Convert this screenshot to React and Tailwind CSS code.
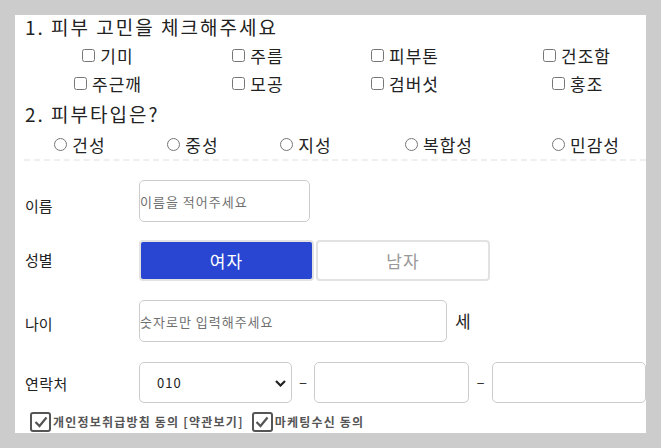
import React from "react";

const font = { fontFamily: '"Noto Sans CJK KR", "Noto Sans", sans-serif' };

function Check({ label }) {
  return (
    <label className="flex items-center gap-[5px] text-[17px] leading-none text-[#222] tracking-[1px]">
      <input type="checkbox" className="m-0 w-[13px] h-[13px]" />
      <span>{label}</span>
    </label>
  );
}

function Radio({ label }) {
  return (
    <label className="flex items-center gap-[5px] text-[17px] leading-none text-[#222] tracking-[1px]">
      <input type="radio" name="skin" className="m-0 w-[13px] h-[13px]" />
      <span>{label}</span>
    </label>
  );
}

function BigCheck({ label }) {
  return (
    <label className="flex items-center gap-[2px] text-[12px] font-bold leading-none text-[#555] tracking-[1.2px] whitespace-nowrap">
      <span className="w-[21px] h-[20px] border-2 border-[#555] rounded-[3px] bg-white flex items-center justify-center">
        <svg width="14" height="12" viewBox="0 0 14 12">
          <path d="M1.5 6 L5.5 10 L12.5 1.5" fill="none" stroke="#555" strokeWidth="2.2" />
        </svg>
      </span>
      <span>{label}</span>
    </label>
  );
}

export default function App() {
  return (
    <div className="w-[661px] h-[448px] bg-[#cccccc] p-[15px]" style={font}>
      <div className="w-[631px] h-[418px] bg-white">
        <h2 className="pt-[1px] h-[23px] leading-[22px] pl-[10px] text-[19px] font-normal text-[#222] whitespace-nowrap tracking-[2px]">
          1. 피부 고민을 체크해주세요
        </h2>
        <div className="mt-[3px] grid grid-cols-[186px_114px_180px_151px] grid-rows-[28px_28px] items-center justify-items-center">
          <Check label="기미" />
          <Check label="주름" />
          <Check label="피부톤" />
          <div className="justify-self-start pl-[48px]">
            <Check label="건조함" />
          </div>
          <Check label="주근깨" />
          <Check label="모공" />
          <Check label="검버섯" />
          <div className="justify-self-start pl-[57px]">
            <Check label="홍조" />
          </div>
        </div>
        <h2 className="mt-[7px] h-[20px] leading-[20px] pl-[10px] text-[19px] font-normal text-[#222] whitespace-nowrap tracking-[2px]">
          2. 피부타입은?
        </h2>
        <div className="mt-[7px] h-[27px] grid grid-cols-[130px_96px_130px_136px_139px] items-center justify-items-center">
          <Radio label="건성" />
          <Radio label="중성" />
          <Radio label="지성" />
          <Radio label="복합성" />
          <div className="justify-self-start pl-[45px]">
            <Radio label="민감성" />
          </div>
        </div>
        <div className="mt-[1px] ml-[9px] border-t-2 border-dashed border-[#efefef]" />

        <div className="pl-[10px] text-[15px] text-[#222]">
          <div className="mt-[19px] h-[42px] flex items-center">
            <span className="w-[114px] pt-[10px]">이름</span>
            <input
              className="w-[171px] h-[42px] border border-[#cccccc] rounded-[5px] px-0 text-[13px] tracking-[1px] placeholder:text-[#707070] outline-none"
              placeholder="이름을 적어주세요"
            />
          </div>
          <div className="mt-[18px] h-[41px] flex items-center">
            <span className="w-[114px]">성별</span>
            <button className="w-[175px] h-[41px] border-2 border-[#e2e2e2] rounded-[4px] bg-[#2846d2] text-white text-[17px] tracking-[1px]">
              여자
            </button>
            <button className="ml-[2px] w-[174px] h-[41px] border-2 border-[#e2e2e2] rounded-[4px] bg-white text-[#999] text-[17px] tracking-[1px]">
              남자
            </button>
          </div>
          <div className="mt-[19px] h-[42px] flex items-center">
            <span className="w-[114px] pt-[6px]">나이</span>
            <input
              className="w-[308px] h-[42px] border border-[#cccccc] rounded-[5px] px-0 text-[13px] tracking-[1px] placeholder:text-[#707070] outline-none"
              placeholder="숫자로만 입력해주세요"
            />
            <span className="ml-[8px] text-[17px] text-[#222]">세</span>
          </div>
          <div className="mt-[20px] h-[41px] flex items-center">
            <span className="w-[114px] pt-[4px] tracking-[0.5px]">연락처</span>
            <div className="relative w-[153px] h-[41px]">
              <select className="appearance-none w-full h-full border border-[#cccccc] rounded-[5px] pl-[17px] text-[13px] text-[#222] bg-white outline-none tracking-[1px]">
                <option>010</option>
              </select>
              <svg
                className="absolute right-[6px] top-[18px] pointer-events-none"
                width="11"
                height="7"
                viewBox="0 0 11 7"
              >
                <path d="M1 1 L5.5 5.5 L10 1" fill="none" stroke="#222" strokeWidth="2.2" />
              </svg>
            </div>
            <span className="w-[22px] text-center text-[15px] text-[#333]">–</span>
            <input className="w-[155px] h-[41px] border border-[#cccccc] rounded-[5px] outline-none" />
            <span className="w-[23px] text-center text-[15px] text-[#333]">–</span>
            <input className="w-[154px] h-[41px] border border-[#cccccc] rounded-[5px] outline-none" />
          </div>
        </div>
        <div className="mt-[9px] pl-[15px] h-[20px] flex items-center">
          <BigCheck label="개인정보취급방침 동의 [약관보기]" />
          <div className="ml-[8px]">
            <BigCheck label="마케팅수신 동의" />
          </div>
        </div>
      </div>
    </div>
  );
}
